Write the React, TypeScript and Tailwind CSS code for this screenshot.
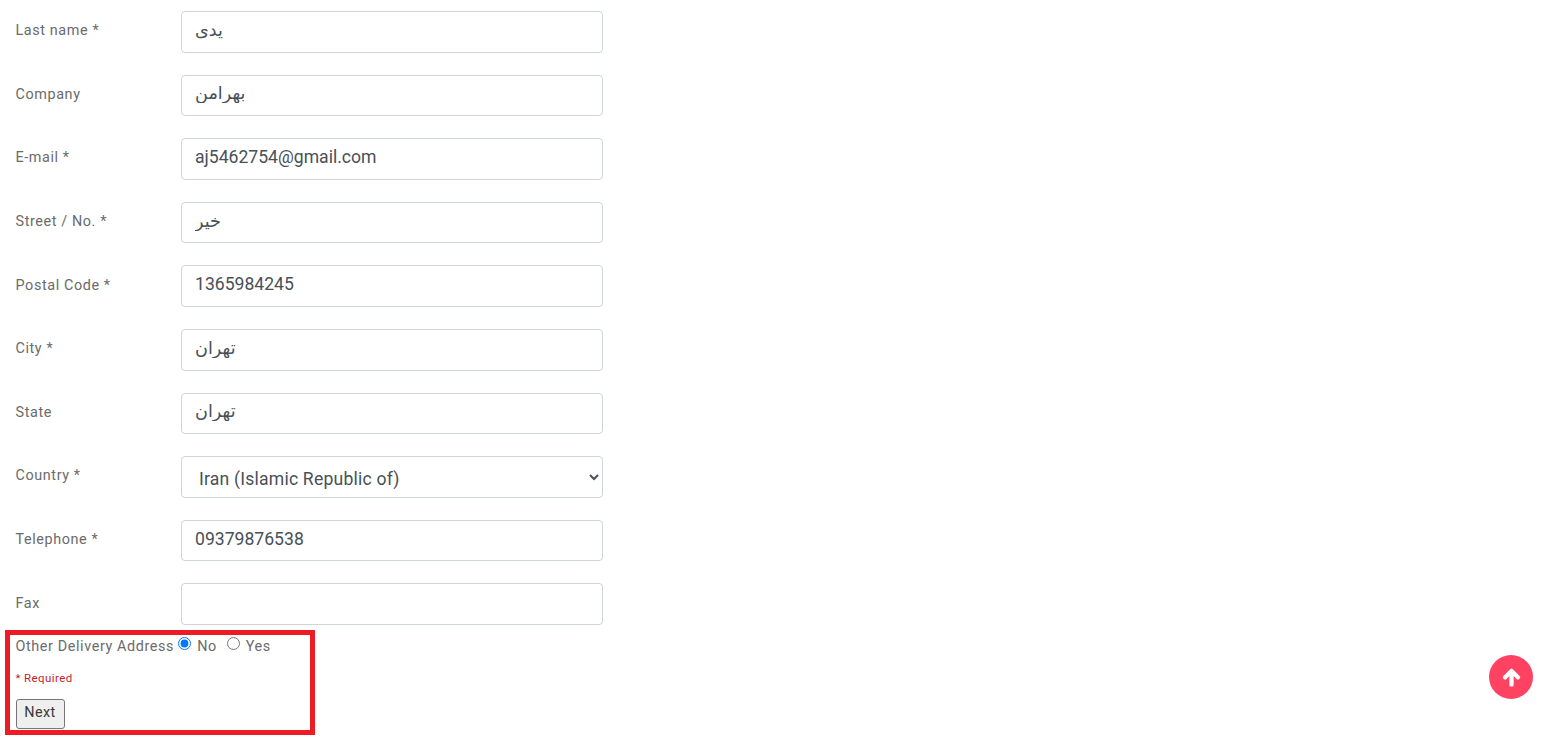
import React from "react";
import { FaArrowUp } from "react-icons/fa";

const fields = [
  { label: "Last name *", value: "یدی", rtl: true },
  { label: "Company", value: "بهرامن", rtl: true },
  { label: "E-mail *", value: "aj5462754@gmail.com" },
  { label: "Street / No. *", value: "خیر", rtl: true },
  { label: "Postal Code *", value: "1365984245" },
  { label: "City *", value: "تهران", rtl: true },
  { label: "State", value: "تهران", rtl: true },
  { label: "Country *", value: "Iran (Islamic Republic of)", select: true },
  { label: "Telephone *", value: "09379876538" },
  { label: "Fax", value: "" },
];

const inputClass =
  "h-[41.6px] w-[422px] rounded-[4px] border border-[#ced4da] bg-white px-[13px] text-[17.6px] text-[#495057] outline-none";

function Field({ label, value, rtl, select }: { label: string; value: string; rtl?: boolean; select?: boolean }) {
  return (
    <div className="mb-[22px] flex items-start">
      <label className="w-[181px] pl-[15.5px] pt-[10.3px] text-[14.4px] leading-[20px] tracking-[0.6px] text-[#6b6b6b]">
        {label}
      </label>
      {select ? (
        <select defaultValue={value} className={`${inputClass} pr-0 pt-[4px] tracking-[0.2px]`}>
          <option>{value}</option>
        </select>
      ) : (
        <input
          type="text"
          readOnly
          value={value}
          dir={rtl ? "auto" : undefined}
          className={`${inputClass} pb-[4px] ${rtl ? "text-left" : ""}`}
        />
      )}
    </div>
  );
}

export default function App() {
  return (
    <div className="min-h-screen overflow-hidden bg-white pt-[11px] font-['Roboto','Noto_Sans','DejaVu_Sans',sans-serif]">
      <form className="-mb-[17px]">
        {fields.map((f) => (
          <Field key={f.label} {...f} />
        ))}
      </form>
      <div className="ml-[5px] h-[105px] w-[310px] border-[5px] border-[#ed1c24] pl-[5.5px] pt-[1px] text-[#6b6b6b]">
        <div className="mt-[1px] flex h-[20px] items-center text-[14.4px] tracking-[0.6px]">
          <span>Other Delivery Address</span>
          <input type="radio" name="other" defaultChecked className="ml-[4px] mr-[6px] mb-[6px] h-[13px] w-[13px]" />
          <span>No</span>
          <input type="radio" name="other" className="ml-[10px] mr-[6px] mb-[6px] h-[13px] w-[13px]" />
          <span>Yes</span>
        </div>
        <p className="mt-[14px] text-[11.5px] leading-[14px] tracking-[0.4px] text-[#c4262e]">* Required</p>
        <button
          type="button"
          className="mt-[14px] h-[30px] w-[49px] rounded-[3px] border border-[#767676] bg-[#efefef] pb-[2px] text-[14.4px] font-normal tracking-[0.4px] text-[#3a3a3a]"
        >
          Next
        </button>
      </div>
      <button
        type="button"
        className="fixed bottom-[39px] right-[22px] flex h-[44px] w-[44px] items-center justify-center rounded-full bg-[#ff4261] text-white"
      >
        <FaArrowUp className="h-[19px] w-[19px]" stroke="currentColor" strokeWidth={36} />
      </button>
    </div>
  );
}
